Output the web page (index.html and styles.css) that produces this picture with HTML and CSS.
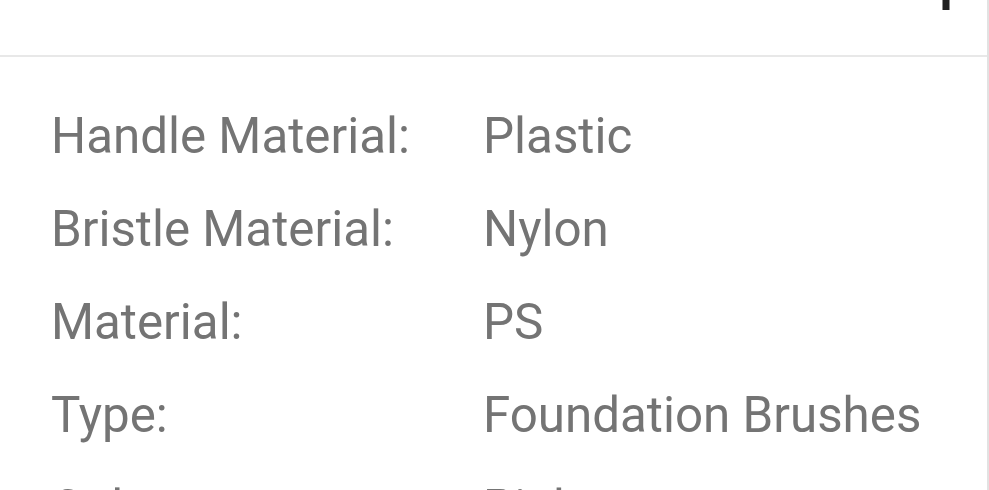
FILE: index.html
```html
<!DOCTYPE html>
<html lang="en">
<head>
<meta charset="utf-8">
<title>Specifications</title>
<link rel="stylesheet" href="styles.css">
</head>
<body>
<div class="card">
  <div class="card-head">
    <h2 class="title">Specifications</h2>
  </div>
  <dl class="specs">
    <div class="row"><dt>Handle Material:</dt><dd>Plastic</dd></div>
    <div class="row"><dt>Bristle Material:</dt><dd>Nylon</dd></div>
    <div class="row"><dt>Material:</dt><dd>PS</dd></div>
    <div class="row"><dt>Type:</dt><dd>Foundation Brushes</dd></div>
    <div class="row"><dt>Color:</dt><dd>Pink</dd></div>
  </dl>
</div>
</body>
</html>
```

FILE: styles.css
```css
html, body {
  margin: 0;
  padding: 0;
  height: 100%;
  overflow: hidden;
  background: #ffffff;
}

body {
  font-family: Roboto, "Noto Sans", Arial, sans-serif;
}

.card {
  width: 987px;
  border-right: 2px solid #e2e2e2;
  background: #ffffff;
  min-height: 100%;
}

.card-head {
  height: 55px;
  border-bottom: 2px solid #e8e8e8;
  overflow: hidden;
}

.title {
  margin: -42px 0 0 0;
  padding-left: 909px;
  font-size: 50px;
  line-height: 50px;
  font-weight: 700;
  color: #1f1f1f;
  white-space: nowrap;
}

.specs {
  margin: 0;
  padding: 33px 0 0 51px;
}

.row {
  display: grid;
  grid-template-columns: 432px 1fr;
  height: 93px;
  font-size: 49.3px;
  line-height: 93px;
  color: #747474;
}

.row dt, .row dd {
  margin: 0;
  white-space: nowrap;
}
```
